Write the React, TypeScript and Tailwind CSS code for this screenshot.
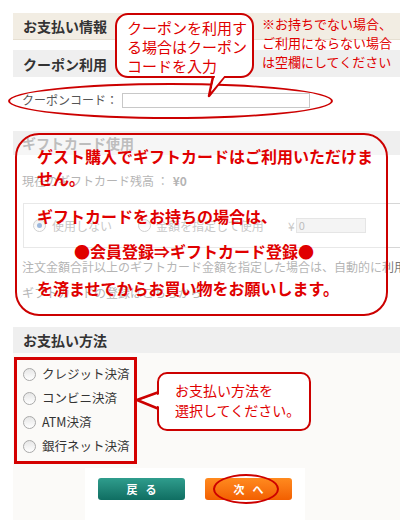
import React from 'react';

function Radio({ checked = false }: { checked?: boolean }) {
  return (
    <span className="inline-flex items-center justify-center w-[13px] h-[13px] rounded-full border border-[#a9a9a9] bg-gradient-to-b from-[#e6e6e6] to-[#ffffff] shrink-0">
      {checked && <span className="w-[5px] h-[5px] rounded-full bg-[#4d7fc0]" />}
    </span>
  );
}

export default function App() {
  const methods = ['クレジット決済', 'コンビニ決済', 'ATM決済', '銀行ネット決済'];

  return (
    <div className="relative w-[400px] h-[520px] overflow-hidden bg-white font-['Noto_Sans_CJK_JP','Liberation_Sans',sans-serif] text-[#333]">
      <div className="pl-[13px] pt-[13px] w-[440px]">
        {/* Header */}
        <div className="h-[27px] bg-[#f2ede3] border-b border-[#e6dfd1] flex items-center pl-[10px]">
          <span className="text-[14px] font-bold leading-none">お支払い情報</span>
        </div>

        {/* Coupon */}
        <div className="mt-[10px] h-[27px] bg-[#efefef] flex items-center pl-[10px]">
          <span className="text-[14px] font-bold leading-none">クーポン利用</span>
        </div>
        <div className="mt-[16px] h-[14px] flex items-center pl-[9px]">
          <span className="text-[12px] text-[#555] leading-none w-[100px]">クーポンコード：</span>
          <div className="w-[188px] h-[15px] border border-[#c8c8c8] bg-white" />
        </div>

        {/* Gift card */}
        <div className="mt-[24px] h-[24px] bg-[#efefef] flex items-center pl-[9px]">
          <span className="text-[14px] font-bold text-[#888] leading-none">ギフトカード使用</span>
        </div>
        <div className="mt-[17px] h-[18px] flex items-center pl-[9px] text-[12px] text-[#777]">
          現在のギフトカード残高 ： <span className="ml-[4px] font-bold">¥0</span>
        </div>
        <div className="mt-[13px] ml-[10px] h-[45px] border border-[#d6d6d6] flex items-center pl-[9px] text-[12px] text-[#999]">
          <Radio checked />
          <span className="ml-[6px] w-[86px]">使用しない</span>
          <Radio />
          <span className="ml-[5px] w-[132px]">金額を指定して使用</span>
          <span>¥</span>
          <div className="ml-[1px] w-[70px] h-[15px] bg-[#ececec] border border-[#cfcfcf] text-[11px] leading-[13px] pl-[2px] text-[#888]">0</div>
        </div>
        <div className="mt-[10px] h-[18px] flex items-center pl-[9px] text-[12px] text-[#777] whitespace-nowrap">
          注文金額合計以上のギフトカード金額を指定した場合は、自動的に利用されます。
        </div>
        <div className="mt-[8px] h-[18px] flex items-center pl-[9px] text-[12px] text-[#777]">
          ギフトカードの登録はこちらから
        </div>

        {/* Payment */}
        <div className="mt-[25px] h-[26px] bg-[#efefef] flex items-center pl-[10px]">
          <span className="text-[14px] font-bold leading-none">お支払い方法</span>
        </div>
        <div className="bg-[#fbfaf8] pt-[4px] pb-[4px] h-[115px]">
          <div className="ml-[1px] w-[123px] h-[107px] border-[3px] border-[#d40000] flex flex-col justify-center gap-[9px] pl-[6px]">
            {methods.map((m) => (
              <div key={m} className="flex items-center h-[15px]">
                <Radio />
                <span className="ml-[6px] text-[12.5px] text-[#333] leading-none">{m}</span>
              </div>
            ))}
          </div>
        </div>
        <div className="flex w-[387px] bg-[#fbfaf8]">
          <div className="ml-[72px] w-[220px] h-[52px] bg-white flex items-start pt-[10px] pl-[13px] gap-[20px]">
            <div className="w-[87px] h-[22px] rounded-[3px] bg-gradient-to-b from-[#2f9d8d] to-[#0f6e62] flex items-center justify-center text-white text-[11px] font-bold tracking-[8px] pl-[8px]">
              戻る
            </div>
            <div className="w-[87px] h-[22px] rounded-[3px] bg-gradient-to-b from-[#ff8a1e] to-[#f25f00] flex items-center justify-center text-white text-[11px] font-bold tracking-[8px] pl-[8px]">
              次へ
            </div>
          </div>
        </div>
      </div>

      {/* Annotations */}
      {/* top right note */}
      <div className="absolute left-[262px] top-[14px] text-[13px] leading-[19px] text-[#e00000]">
        ※お持ちでない場合、<br />ご利用にならない場合<br />は空欄にしてください
      </div>

      {/* coupon ellipse */}
      <div className="absolute left-[8px] top-[83px] w-[325px] h-[36px] rounded-[50%] border-[2px] border-[#cc0000]" />

      {/* coupon bubble */}
      <svg className="absolute left-[200px] top-[70px]" width="40" height="30" viewBox="0 0 40 30">
        <path d="M14 2 L9 26 L28 2" fill="white" stroke="#cc0000" strokeWidth="2.5" strokeLinejoin="round" />
      </svg>
      <div className="absolute left-[115px] top-[13px] w-[139px] h-[65px] rounded-[13px] border-[2.5px] border-[#cc0000] bg-white pl-[10px] pt-[3px] text-[15px] leading-[19px] text-[#e00000]">
        クーポンを利用す<br />る場合はクーポン<br />コードを入力
      </div>
      <svg className="absolute left-[200px] top-[70px]" width="40" height="30" viewBox="0 0 40 30">
        <path d="M15.5 4 L11 22 L26 4 Z" fill="white" />
      </svg>

      {/* gift overlay */}
      <div className="absolute left-[15px] top-[133px] w-[373px] h-[183px] rounded-[24px] border-[2px] border-[#cc0000] bg-white/45 pl-[20px] pt-[10px] text-[16px] leading-[23px] font-bold text-[#e00000]">
        <div>ゲスト購入でギフトカードはご利用いただけま</div>
        <div className="-mt-px">せん。</div>
        <div className="mt-[15px]">ギフトカードをお持ちの場合は、</div>
        <div className="mt-[12px] pl-[37px]">●会員登録⇒ギフトカード登録●</div>
        <div className="mt-[14px]">を済ませてからお買い物をお願いします。</div>
      </div>

      {/* payment bubble */}
      <svg className="absolute left-[134px] top-[388px]" width="30" height="26" viewBox="0 0 30 26">
        <path d="M25 4 L3 12 L25 21" fill="white" stroke="#cc0000" strokeWidth="2.5" strokeLinejoin="round" />
      </svg>
      <div className="absolute left-[157px] top-[372px] w-[154px] h-[59px] rounded-[10px] border-[2.5px] border-[#cc0000] bg-white pl-[16px] pt-[6px] text-[14px] leading-[20px] text-[#e00000]">
        お支払い方法を<br />選択してください。
      </div>
      <svg className="absolute left-[134px] top-[388px]" width="30" height="26" viewBox="0 0 30 26">
        <path d="M26 6 L8 12 L26 19 Z" fill="white" />
      </svg>

      {/* next ellipse */}
      <div className="absolute left-[213px] top-[474px] w-[66px] h-[30px] rounded-[50%] border-[2px] border-[#cc0000]" />
    </div>
  );
}
